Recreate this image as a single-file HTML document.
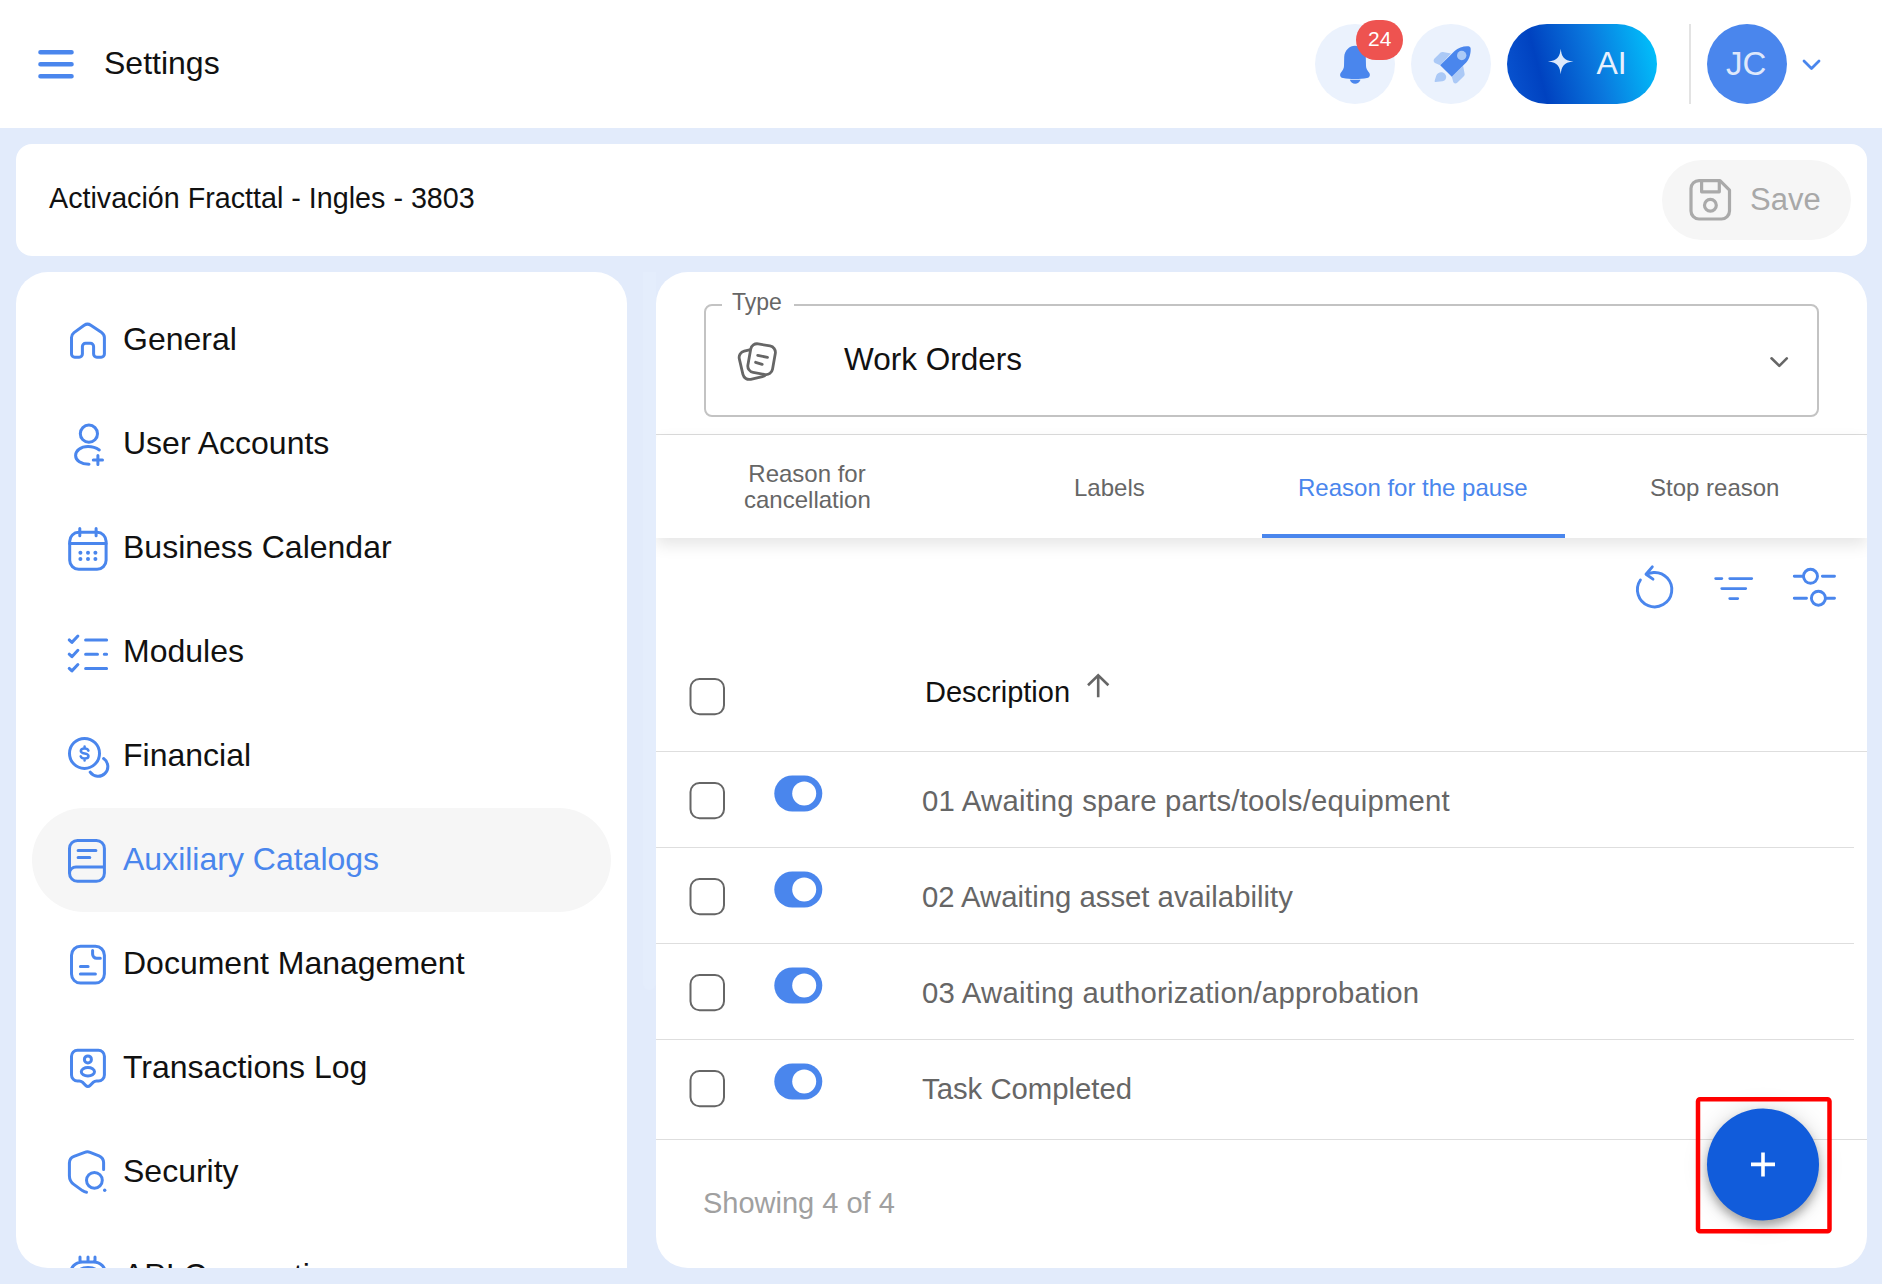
<!DOCTYPE html>
<html><head><meta charset="utf-8">
<style>
*{box-sizing:border-box;margin:0;padding:0}
html,body{width:1882px;height:1284px;overflow:hidden;background:#e2ebfb;font-family:"Liberation Sans",sans-serif}
.a{position:absolute}
.t{position:absolute;line-height:1;white-space:nowrap;top:calc(var(--b) - 0.85em)}
#hdr{left:0;top:0;width:1882px;height:128px;background:#fff}
#title{left:16px;top:144px;width:1851px;height:112px;background:#fff;border-radius:16px}
#side{left:16px;top:272px;width:611px;height:996px;background:#fff;border-radius:32px 32px 0 32px;overflow:hidden}
#main{left:656px;top:272px;width:1211px;height:996px;background:#fff;border-radius:32px;overflow:hidden}
svg.ov{position:absolute;left:0;top:0;width:1882px;height:1284px}
</style></head>
<body>
<div id="hdr" class="a"></div>
<div id="title" class="a"></div>
<div id="side" class="a"></div>
<div id="main" class="a"></div>


<!-- header right -->
<div class="a" style="left:1315px;top:24px;width:80px;height:80px;border-radius:40px;background:#ebf2fd"></div>
<div class="a" style="left:1411px;top:24px;width:80px;height:80px;border-radius:40px;background:#ebf2fd"></div>
<div class="a" style="left:1507px;top:24px;width:150px;height:80px;border-radius:40px;background:linear-gradient(75deg,#0a56d2 0%,#0042c0 24%,#0a78de 58%,#00c8fe 100%)"></div>
<div class="a" style="left:1689px;top:24px;width:2px;height:80px;background:#e3e3e3"></div>
<div class="a" style="left:1707px;top:24px;width:80px;height:80px;border-radius:40px;background:#4a86ed"></div>
<div class="t" style="--b:74px;left:1596.5px;font-size:32px;color:#e8f0fd">AI</div>
<div class="t" style="--b:75px;left:1726px;font-size:33px;color:#dfe8fb">JC</div>
<div class="a" style="left:1662px;top:160px;width:189px;height:80px;border-radius:40px;background:#f6f6f6;z-index:-0"></div>
<div class="t" style="--b:210px;left:1750px;font-size:31px;color:#a8a8a8">Save</div>


<div class="a" style="left:643px;top:272px;width:13px;height:718px;border-radius:0 0 7px 7px;background:#e4edfc"></div>
<!-- sidebar active pill -->
<div class="a" style="left:32px;top:808px;width:579px;height:104px;border-radius:52px;background:#f6f6f6"></div>
<!-- select -->
<div class="a" style="left:704px;top:304px;width:1115px;height:113px;border:2px solid #c3c3c3;border-radius:8px"></div>
<div class="a" style="left:722px;top:296px;width:72px;height:16px;background:#fff"></div>
<!-- tab bar + separators (clipped inside main card) -->
<div class="a" style="left:656px;top:272px;width:1211px;height:996px;border-radius:32px;overflow:hidden">
 <div class="a" style="left:0;top:162px;width:1211px;height:1px;background:#dcdcdc"></div>
 <div class="a" style="left:0;top:163px;width:1211px;height:103px;background:#fff;border-radius:5px 5px 0 0;box-shadow:0 7px 16px rgba(0,0,0,0.10)"></div>
 <div class="a" style="left:606px;top:262px;width:303px;height:3.5px;background:#4a86ed"></div>
 <div class="a" style="left:0;top:479px;width:1211px;height:1px;background:#dedede"></div>
 <div class="a" style="left:0;top:575px;width:1198px;height:1px;background:#dedede"></div>
 <div class="a" style="left:0;top:671px;width:1198px;height:1px;background:#dedede"></div>
 <div class="a" style="left:0;top:767px;width:1198px;height:1px;background:#dedede"></div>
 <div class="a" style="left:0;top:867px;width:1211px;height:1px;background:#dedede"></div>
</div>
<svg class="ov" viewBox="0 0 1882 1284">
<defs><clipPath id="sc"><rect x="16" y="272" width="611" height="996"/></clipPath>
<filter id="fs" x="-50%" y="-50%" width="200%" height="200%"><feGaussianBlur stdDeviation="5"/></filter><filter id="fs2" x="-50%" y="-50%" width="200%" height="200%"><feGaussianBlur stdDeviation="10"/></filter></defs>
<g fill="none" stroke="#4a86ed" stroke-linecap="round" stroke-linejoin="round">
 <path stroke-width="4.6" d="M40.5 52.2H71.5M40.5 64.2H71.5M40.5 76.2H71.5"/>
 <path stroke-width="2.8" d="M1804 61L1811.5 68.5L1819 61"/>
</g>
<!-- bell -->
<g fill="#4a86ed">
 <path d="M1355 45.8C1349.5 45.8 1344.5 50.5 1344.2 57L1344 66C1344 68.5 1342.5 70.5 1341 72.5C1339.5 74.5 1339.8 77.3 1343 78C1350 79.3 1360 79.3 1367 78C1370.2 77.3 1370.5 74.5 1369 72.5C1367.5 70.5 1366 68.5 1366 66L1365.8 57C1365.5 50.5 1360.5 45.8 1355 45.8Z"/>
 <path d="M1349.8 79.8H1360.5C1359.5 82.5 1357.5 83.8 1355.1 83.8C1352.7 83.8 1350.8 82.5 1349.8 79.8Z"/>
</g>
<!-- rocket -->
<g fill="#abc9f6">
 <path d="M1440.2 65.3L1450.9 53.6L1443 52C1442 51.8 1441.3 52 1440.6 52.6L1434.3 58.8C1433 60.2 1433.6 62.5 1435.5 63.3Z"/>
 <path d="M1451.8 76.8L1463.1 65.8L1464.6 73.8C1464.8 74.8 1464.5 75.6 1463.8 76.3L1457.2 82.8C1455.8 84.2 1453.5 83.5 1453.1 81.6Z"/>
 <path d="M1435.5 82C1434.6 82.3 1434.6 81 1434.8 80.2L1436.2 75.8C1436.9 73.6 1439 72.2 1441.3 72.2C1444 72.2 1446.2 74.4 1446.2 77C1446.2 79.3 1444.6 81 1442.5 81.2Z"/>
</g>
<path fill="#4a86ed" d="M1440.2 65.3L1451.8 76.8L1466.2 62.6C1469.8 58.8 1471 52.5 1470.6 48.3C1470.5 47.2 1469.6 46.3 1468.5 46.2C1464.2 45.8 1458.2 47.2 1454.6 51Z"/>
<circle cx="1461.7" cy="55.5" r="4.7" fill="#abc9f6"/>
<!-- sparkle -->
<path fill="#dde9fb" d="M1560.7 48.7C1561.6 56 1563.2 60.6 1573.5 61.5C1563.2 62.4 1561.6 67 1560.7 74.3C1559.8 67 1558.2 62.4 1547.9 61.5C1558.2 60.6 1559.8 56 1560.7 48.7Z"/>
<!-- floppy -->
<g fill="none" stroke="#aaaaaa" stroke-width="3.2" stroke-linejoin="round">
 <path d="M1699 180.6H1720L1729.5 190.1V211C1729.5 215.4 1725.9 219 1721.5 219H1699C1694.6 219 1691 215.4 1691 211V188.6C1691 184.2 1694.6 180.6 1699 180.6Z"/>
 <path d="M1701.6 180.6V191.8H1719.3V180.6"/>
 <circle cx="1710.4" cy="205.3" r="5.9"/>
</g>
<!-- sidebar icons -->
<g fill="none" stroke="#4a86ed" stroke-width="3" stroke-linecap="round" stroke-linejoin="round" clip-path="url(#sc)">
 <path d="M71.5 337.5C71.5 335.2 72.5 333.8 74 332.6L84.2 325.2C86.3 323.8 88.7 323.8 90.8 325.2L101.7 332.6C103.3 333.8 104.4 335.2 104.4 337.5V354C104.4 355.8 103 357.2 101.2 357.2H96.8C95 357.2 93.6 355.8 93.6 354V346.5C93.6 344.7 92.2 343.3 90.4 343.3H85.6C83.8 343.3 82.4 344.7 82.4 346.5V354C82.4 355.8 81 357.2 79.2 357.2H74.7C72.9 357.2 71.5 355.8 71.5 354Z"/>
 <circle cx="88.9" cy="433.7" r="8.6"/>
 <path d="M99.3 450C96 447.7 92.4 446.5 88 446.5C80.6 446.5 75.6 450.8 75.6 455.5C75.6 460.5 81 464 89 464.3M93.3 460H102.5M97.9 455.4V464.6"/>
 <rect x="69.7" y="532.3" width="36.4" height="37" rx="9"/>
 <path d="M69.7 543.4H106.1M79.8 528.5V535.7M96.1 528.5V535.7"/>
 <path d="M69.2 639.9L71.9 642.4L77.9 636M69.2 654.2L71.9 656.7L77.9 650.3M69.2 668.4L71.9 670.9L77.9 664.5M85.6 639.9H106.6M85.6 654.2H97.5M104.3 654.2H106.6M85.6 668.4H106.6"/>
 <circle cx="84.5" cy="753.4" r="15"/>
 <path d="M103.6 758.6A9.7 9.7 0 1 1 90.2 772.2"/>
 <path stroke-width="2.5" d="M88.4 750.6C88 749.2 86.6 748.4 84.6 748.4C82.3 748.4 80.8 749.5 80.8 751C80.8 754.6 88.5 752.4 88.5 756C88.5 757.6 87 758.6 84.6 758.6C82.6 758.6 81.2 757.8 80.7 756.4M84.6 746.5V748.4M84.6 758.6V760.5"/>
 <path d="M77.5 840.4H96.4C100.8 840.4 104.4 844 104.4 848.4V873.3C104.4 877.7 100.8 881.3 96.4 881.3H77.5C73.1 881.3 69.5 877.7 69.5 873.3V848.4C69.5 844 73.1 840.4 77.5 840.4ZM104.4 866.9H76C72.5 866.9 69.5 869.8 69.5 873.3M78.1 850.4H95.9M78.1 857.6H89.8"/>
 <rect x="71.5" y="946.2" width="32.9" height="36.9" rx="9"/>
 <path d="M92.6 950.5V954.3C92.6 956.5 94.4 958.2 96.6 958.2H100.3M80.4 966.5H88.1M80.4 974.1H95.4"/>
 <path d="M77.5 1050.3H98.4C101.7 1050.3 104.4 1053 104.4 1056.3V1075C104.4 1078.3 101.7 1081 98.4 1081H96.5C95.3 1081 94.2 1081.5 93.4 1082.2L89.9 1085.6C88.8 1086.7 87 1086.7 85.9 1085.6L82.4 1082.2C81.6 1081.5 80.5 1081 79.3 1081H77.5C74.2 1081 71.5 1078.3 71.5 1075V1056.3C71.5 1053 74.2 1050.3 77.5 1050.3Z"/>
 <circle cx="87.9" cy="1059.4" r="3.5"/>
 <ellipse cx="87.9" cy="1071.8" rx="6.6" ry="4.2"/>
 <path d="M86.5 1192.2C85 1192 83.6 1191.4 82.4 1190.6L73.8 1184.4C71 1182.4 69.4 1179.2 69.4 1175.8V1163C69.4 1160 71.2 1157.4 74 1156.3L84.7 1152.3C86.4 1151.7 88.4 1151.7 90.1 1152.3L99 1155.8C101.7 1157 103.6 1159.6 103.6 1162.6V1169.5"/>
 <circle cx="94.4" cy="1180.3" r="7.9"/>
 <path d="M80 1257V1262M88 1257V1262M95 1257V1262M70.5 1274C70.5 1267 75.5 1262 82.5 1262H93.5C100.5 1262 105.5 1267 105.5 1274M78 1275C78 1270 82 1267.5 88 1267.5C94 1267.5 98 1270 98 1275"/>
</g>
<circle cx="104.7" cy="1190.3" r="1.7" fill="#4a86ed"/>
<g fill="#4a86ed">
 <circle cx="80.4" cy="552.7" r="2"/><circle cx="88" cy="552.7" r="2"/><circle cx="95.4" cy="552.7" r="2"/>
 <circle cx="80.4" cy="559" r="2"/><circle cx="88" cy="559" r="2"/><circle cx="95.4" cy="559" r="2"/>
</g>
<!-- work orders icon -->
<g fill="#fff" stroke="#666" stroke-width="2.8" stroke-linecap="round" stroke-linejoin="round">
 <rect x="-12.5" y="-14.5" width="25" height="29" rx="6.5" transform="translate(753.3 363.8) rotate(-13)"/>
 <rect x="-12.5" y="-14.5" width="25" height="29" rx="6.5" transform="translate(761.6 359.2) rotate(10)"/>
 <path d="M757.7 355.3L767.5 357.4M755.6 362.3L762.2 364.4"/>
 <path fill="none" stroke-width="2.6" d="M1771.5 358.3L1779.3 365.8L1786.8 358.3"/>
</g>
<!-- toolbar icons -->
<g fill="none" stroke="#4a86ed" stroke-width="2.9" stroke-linecap="round" stroke-linejoin="round">
 <path d="M1640.4 580A17.2 17.2 0 1 0 1653.5 572.5L1647.5 573.6M1652.3 566.9L1646 574.2L1653 579.1"/>
 <path d="M1715.7 578.6H1721.8M1729.8 578.6H1751.7M1721.8 588.6H1745.7M1729.8 598.6H1737.7"/>
 <path d="M1794.3 576.3H1803.5M1822.4 576.3H1834.5M1794.3 598.2H1806.5M1826 598.2H1834.5"/>
 <circle cx="1810.5" cy="576.3" r="7"/><circle cx="1818.4" cy="598.2" r="7"/>
</g>
<!-- checkboxes -->
<g fill="none" stroke="#666" stroke-width="2">
 <rect x="690.5" y="679" width="33.5" height="35.3" rx="9"/>
 <rect x="690.5" y="783" width="33.5" height="35.3" rx="9"/>
 <rect x="690.5" y="879" width="33.5" height="35.3" rx="9"/>
 <rect x="690.5" y="975" width="33.5" height="35.3" rx="9"/>
 <rect x="690.5" y="1071" width="33.5" height="35.3" rx="9"/>
</g>
<path fill="none" stroke="#666" stroke-width="2.6" stroke-linecap="butt" stroke-linejoin="miter" d="M1098.2 675.5V697.2M1088 685.2L1098.2 675.2L1108.4 685.2"/>
<!-- toggles -->
<g fill="#4a86ed">
 <rect x="774.3" y="775.5" width="48" height="36" rx="18"/>
 <rect x="774.3" y="871.5" width="48" height="36" rx="18"/>
 <rect x="774.3" y="967.5" width="48" height="36" rx="18"/>
 <rect x="774.3" y="1063.5" width="48" height="36" rx="18"/>
</g>
<g fill="#fff">
 <circle cx="804.2" cy="793.4" r="12"/><circle cx="804.2" cy="889.4" r="12"/><circle cx="804.2" cy="985.4" r="12"/><circle cx="804.2" cy="1081.4" r="12"/>
</g>
<!-- FAB -->
<circle cx="1763" cy="1166" r="60" fill="rgba(0,0,0,0.10)" filter="url(#fs2)"/>
<circle cx="1763" cy="1170" r="56" fill="rgba(0,0,0,0.30)" filter="url(#fs)"/>
<circle cx="1763" cy="1164.4" r="56" fill="#115cdb"/>
<path stroke="#fff" stroke-width="3.6" d="M1751 1164.4H1775M1763 1152.4V1176.4"/>
<rect x="1698" y="1099.2" width="131.5" height="132" rx="2" fill="none" stroke="#ff0000" stroke-width="4.5"/>
</svg>

<div class="a" style="left:1356px;top:20px;width:47px;height:40px;border-radius:20px;background:#ee5350"></div>
<div class="t" style="--b:46px;left:1368px;font-size:21px;color:#fff">24</div>
<!-- sidebar texts -->
<div class="a" style="left:16px;top:272px;width:611px;height:996px;overflow:hidden">
<div class="t" style="--b:78px;left:107px;font-size:32px;color:#111">General</div>
<div class="t" style="--b:182px;left:107px;font-size:32px;color:#111">User Accounts</div>
<div class="t" style="--b:286px;left:107px;font-size:32px;color:#111">Business Calendar</div>
<div class="t" style="--b:390px;left:107px;font-size:32px;color:#111">Modules</div>
<div class="t" style="--b:494px;left:107px;font-size:32px;color:#111">Financial</div>
<div class="t" style="--b:598px;left:107px;font-size:32px;color:#4a86ed">Auxiliary Catalogs</div>
<div class="t" style="--b:702px;left:107px;font-size:32px;color:#111">Document Management</div>
<div class="t" style="--b:806px;left:107px;font-size:32px;color:#111">Transactions Log</div>
<div class="t" style="--b:910px;left:107px;font-size:32px;color:#111">Security</div>
<div class="t" style="--b:1014px;left:107px;font-size:32px;color:#111">API Connections</div>
</div>
<!-- main texts -->
<div class="t" style="--b:311px;left:732px;font-size:23px;color:#666">Type</div>
<div class="t" style="--b:370.5px;left:844px;font-size:31.5px;color:#111">Work Orders</div>
<div class="t" style="--b:482px;left:747px;width:120px;text-align:center;font-size:24px;color:#666">Reason for</div>
<div class="t" style="--b:508.6px;left:744px;font-size:24px;color:#666">cancellation</div>
<div class="t" style="--b:496.5px;left:1074px;font-size:24px;color:#666">Labels</div>
<div class="t" style="--b:496.5px;left:1298px;font-size:24px;color:#4a86ed">Reason for the pause</div>
<div class="t" style="--b:496.5px;left:1650px;font-size:24px;color:#666">Stop reason</div>
<div class="t" style="--b:703px;left:925px;font-size:29px;color:#111">Description</div>
<div class="t" style="--b:810.8px;left:922px;font-size:29.3px;letter-spacing:0.23px;color:#666">01 Awaiting spare parts/tools/equipment</div>
<div class="t" style="--b:906.8px;left:922px;font-size:29.3px;color:#666">02 Awaiting asset availability</div>
<div class="t" style="--b:1002.8px;left:922px;font-size:29.3px;letter-spacing:0.25px;color:#666">03 Awaiting authorization/approbation</div>
<div class="t" style="--b:1098.8px;left:922px;font-size:29.3px;color:#666">Task Completed</div>
<div class="t" style="--b:1214px;left:703px;font-size:29px;color:#a0a0a0">Showing 4 of 4</div>

<!-- header texts -->
<div class="t" style="--b:74px;left:104px;font-size:32px;color:#111">Settings</div>
<div class="t" style="--b:208px;left:49px;font-size:28.7px;color:#111">Activación Fracttal - Ingles - 3803</div>

</body></html>
